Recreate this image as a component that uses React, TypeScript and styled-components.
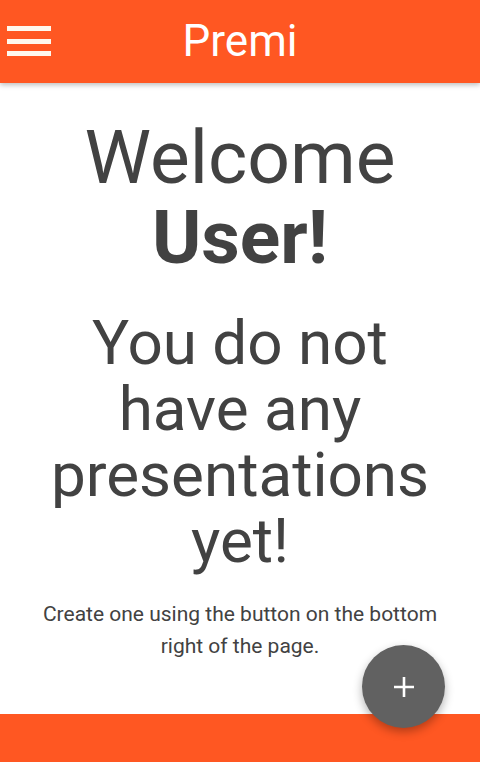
import React from "react";
import styled, { createGlobalStyle } from "styled-components";

const GlobalStyle = createGlobalStyle`
  html, body {
    margin: 0;
    padding: 0;
    background: #fff;
    font-family: Roboto, "Noto Sans", sans-serif;
  }
`;

const Page = styled.div`
  display: flex;
  flex-direction: column;
  min-height: 100vh;
`;

const TopBar = styled.header`
  height: 83px;
  background-color: #ff5722;
  display: flex;
  align-items: center;
  justify-content: center;
  position: relative;
  box-shadow: 0 2px 5px rgba(0, 0, 0, 0.26);
  z-index: 2;
`;

const MenuButton = styled.button`
  position: absolute;
  left: 7px;
  top: 26px;
  width: 44px;
  height: 30px;
  padding: 0;
  border: none;
  background: transparent;
  display: flex;
  flex-direction: column;
  justify-content: space-between;
  cursor: pointer;

  span {
    display: block;
    height: 5px;
    background: #fff8ee;
  }
`;

const BrandTitle = styled.h1`
  margin: 0 0 2px;
  font-size: 44px;
  font-weight: 400;
  color: #fff;
`;

const Main = styled.main`
  flex: 1;
  padding: 34px 40px 40px;
  text-align: center;
  color: #424242;
`;

const Welcome = styled.h2`
  margin: 0;
  font-size: 75px;
  line-height: 80px;
  font-weight: 400;

  strong {
    font-weight: 700;
  }
`;

const EmptyTitle = styled.h3`
  margin: 33px 0 0;
  font-size: 62px;
  line-height: 66px;
  font-weight: 400;
`;

const Hint = styled.p`
  margin: 24px -12px 0;
  font-size: 21px;
  line-height: 32px;
`;

const BottomBar = styled.footer`
  height: 48px;
  background-color: #ff5722;
`;

const Fab = styled.button`
  position: fixed;
  right: 35px;
  bottom: 34px;
  width: 83px;
  height: 83px;
  border-radius: 50%;
  border: none;
  background: #616161;
  color: #fff;
  display: flex;
  align-items: center;
  justify-content: center;
  box-shadow: 0 4px 10px rgba(0, 0, 0, 0.3);
  cursor: pointer;
  z-index: 3;
`;

export default function App() {
  return (
    <>
      <GlobalStyle />
      <Page>
        <TopBar>
          <MenuButton aria-label="menu">
            <span />
            <span />
            <span />
          </MenuButton>
          <BrandTitle>Premi</BrandTitle>
        </TopBar>
        <Main>
          <Welcome>
            Welcome <strong>User!</strong>
          </Welcome>
          <EmptyTitle>You do not have any presentations yet!</EmptyTitle>
          <Hint>Create one using the button on the bottom right of the page.</Hint>
        </Main>
        <BottomBar />
      </Page>
      <Fab aria-label="add">
        <svg width="22" height="22" viewBox="0 0 22 22">
          <path d="M11 1v20M1 11h20" stroke="#fff" strokeWidth="2.6" />
        </svg>
      </Fab>
    </>
  );
}
